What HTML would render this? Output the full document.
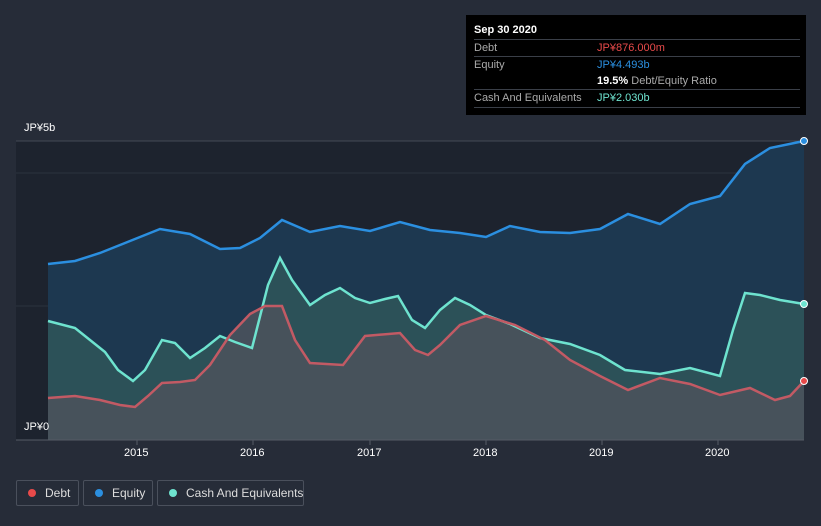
<!DOCTYPE html><html><head><style>
body{margin:0;width:821px;height:526px;background:#262c38;font-family:"Liberation Sans",sans-serif;overflow:hidden;position:relative}
.tt{position:absolute;left:466px;top:15px;width:340px;height:100px;background:#000;color:#fff;font-size:11px}
.tt .r{position:absolute;left:8px;right:6px;border-top:1px solid #3a3f48;height:17px;line-height:17px;color:#aaa}
.tt .v{position:absolute;left:123px;top:0}
.lg{position:absolute;top:480px;height:26px;border:1px solid #4a505c;border-radius:2px;color:#ddd;font-size:12px;line-height:24px;box-sizing:border-box;white-space:nowrap;padding-left:28px}
.lg i{position:absolute;left:11px;top:8px;width:8px;height:8px;border-radius:50%}
.ax{position:absolute;color:#fff;font-size:11px}
</style></head><body>
<svg width="821" height="526" style="position:absolute;left:0;top:0">
<rect x="16" y="141" width="788" height="299" fill="#1d232e"/>
<line x1="16" y1="141" x2="804" y2="141" stroke="#444a55"/>
<line x1="16" y1="173" x2="804" y2="173" stroke="#2c333f"/>
<line x1="16" y1="306" x2="804" y2="306" stroke="#2c333f"/>
<path d="M48,264 L75,261 100,253 130,241 160,229 190,234 220,249 240,248 260,238 282,220 310,232 340,226 370,231 400,222 430,230 460,233 486,237 510,226 540,232 570,233 600,229 628,214 660,224 690,204 720,196 745,164 770,148 804,141 L804,440 48,440Z" fill="#1d3850"/>
<path d="M48,321 L75,328 105,352 118,370 133,381 145,370 162,340 175,343 190,358 205,348 220,336 235,342 252,348 268,285 280,258 292,280 310,305 325,295 340,288 355,298 370,303 385,299 398,296 412,320 425,328 440,310 455,298 470,305 486,315 510,324 540,338 570,344 600,355 625,370 660,374 690,368 720,376 733,330 745,293 760,295 780,300 804,304 L804,440 48,440Z" fill="#2c5158"/>
<path d="M48,398 L75,396 100,400 120,405 135,407 148,396 162,383 180,382 195,380 210,365 230,335 250,314 265,306 282,306 295,340 310,363 343,365 365,336 400,333 415,350 428,355 440,345 460,325 486,316 515,325 545,340 570,360 600,376 628,390 660,378 690,384 720,395 750,388 775,400 790,396 804,381 L804,440 48,440Z" fill="#4a525c" opacity="0.9"/>
<path d="M48,264 L75,261 100,253 130,241 160,229 190,234 220,249 240,248 260,238 282,220 310,232 340,226 370,231 400,222 430,230 460,233 486,237 510,226 540,232 570,233 600,229 628,214 660,224 690,204 720,196 745,164 770,148 804,141" fill="none" stroke="#2b8fe0" stroke-width="2.5"/>
<path d="M48,321 L75,328 105,352 118,370 133,381 145,370 162,340 175,343 190,358 205,348 220,336 235,342 252,348 268,285 280,258 292,280 310,305 325,295 340,288 355,298 370,303 385,299 398,296 412,320 425,328 440,310 455,298 470,305 486,315 510,324 540,338 570,344 600,355 625,370 660,374 690,368 720,376 733,330 745,293 760,295 780,300 804,304" fill="none" stroke="#6ee3cf" stroke-width="2.5"/>
<path d="M48,398 L75,396 100,400 120,405 135,407 148,396 162,383 180,382 195,380 210,365 230,335 250,314 265,306 282,306 295,340 310,363 343,365 365,336 400,333 415,350 428,355 440,345 460,325 486,316 515,325 545,340 570,360 600,376 628,390 660,378 690,384 720,395 750,388 775,400 790,396 804,381" fill="none" stroke="#c25a64" stroke-width="2.5"/>
<circle cx="804" cy="141" r="3.5" fill="#2b8fe0" stroke="#fff"/>
<circle cx="804" cy="304" r="3.5" fill="#6ee3cf" stroke="#fff"/>
<circle cx="804" cy="381" r="3.5" fill="#e84a4a" stroke="#fff"/>
<line x1="16" y1="440" x2="804" y2="440" stroke="#555b66"/>
<g stroke="#555b66"><line x1="137" y1="440" x2="137" y2="445"/><line x1="253" y1="440" x2="253" y2="445"/><line x1="370" y1="440" x2="370" y2="445"/><line x1="486" y1="440" x2="486" y2="445"/><line x1="602" y1="440" x2="602" y2="445"/><line x1="718" y1="440" x2="718" y2="445"/></g>
</svg>
<div class="ax" style="left:24px;top:122px">JP¥5b</div>
<div class="ax" style="left:24px;top:421px">JP¥0</div>
<div class="ax" style="left:124px;top:447px">2015</div>
<div class="ax" style="left:240px;top:447px">2016</div>
<div class="ax" style="left:357px;top:447px">2017</div>
<div class="ax" style="left:473px;top:447px">2018</div>
<div class="ax" style="left:589px;top:447px">2019</div>
<div class="ax" style="left:705px;top:447px">2020</div>
<div class="tt">
<div style="position:absolute;left:8px;top:9px;font-weight:bold">Sep 30 2020</div>
<div class="r" style="top:24px">Debt<span class="v" style="color:#e84a4a">JP¥876.000m</span></div>
<div class="r" style="top:41px">Equity<span class="v" style="color:#2b8fe0">JP¥4.493b</span></div>
<div class="r" style="top:58px;border:0"><span class="v" style="color:#aaa"><b style="color:#fff">19.5%</b> Debt/Equity Ratio</span></div>
<div class="r" style="top:74px">Cash And Equivalents<span class="v" style="color:#6ee3cf">JP¥2.030b</span></div>
<div class="r" style="top:92px;height:0"></div>
</div>
<div class="lg" style="left:16px;width:63px"><i style="background:#e84a4a"></i>Debt</div>
<div class="lg" style="left:83px;width:70px"><i style="background:#2b8fe0"></i>Equity</div>
<div class="lg" style="left:157px;width:147px"><i style="background:#6ee3cf"></i>Cash And Equivalents</div>
</body></html>
